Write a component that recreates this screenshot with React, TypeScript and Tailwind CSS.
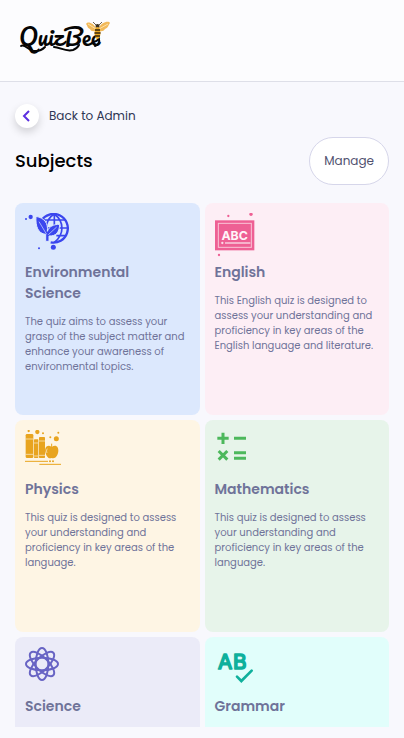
import type { ReactNode } from "react";

type Subject = {
  title: string;
  description?: string;
  background: string;
  icon: ReactNode;
};

function Logo() {
  return (
    <svg viewBox="0 0 94 36" className="h-9 w-[94px] overflow-visible" role="img" aria-label="QuizBee">
      <text
        x="0"
        y="26"
        className="font-['Pacifico','Kaushan_Script','Lato',cursive] text-[23px] font-normal"
        fill="#050505"
      >
        QuizBee
      </text>
      <path
        d="M2 26 C6 23 10 32 17 31 C21 31 24 29 26 27 M35 27 C41 27 46 32 54 30 C57 29 59 27 60 25 M76 26 C79 25 81 22 80 19"
        fill="none"
        stroke="#050505"
        strokeWidth="2"
        strokeLinecap="round"
      />
      <path d="M78 9 C74 2 68 1 67 4 C69 6 68 8 71 9 C72 12 76 12 78 9Z" fill="#f2b95a" />
      <path d="M79 9 C82 2 90 0 91 3 C89 6 89 8 86 9 C84 12 81 12 79 9Z" fill="#f2b95a" />
      <path d="M69 4 L77 9 M80 9 L89 4" stroke="#fbe2ac" strokeWidth="1" />
      <path d="M77 5 L74 2 M80 5 L83 2" stroke="#4a3820" strokeWidth="0.8" />
      <circle cx="78.5" cy="6" r="2" fill="#3c3120" />
      <ellipse cx="78.5" cy="13" rx="3" ry="6" fill="#e9a723" />
      <path d="M76 10h5M75.5 13h6M76 16h5" stroke="#33240d" strokeWidth="1.4" />
    </svg>
  );
}

function EnvironmentIcon() {
  return (
    <svg viewBox="45 39 132 132" className="size-11" aria-hidden="true">
      <g fill="none" stroke="#3b46ee" strokeWidth="5">
        <path d="M94 62 A43 43 0 1 1 122 127" strokeWidth="7" />
        <path d="M133 42 C114 53 109 67 109 84 M133 42 C164 66 163 103 133 127 M133 42 V90 M101 60 H165 M112 84 H175 M139 107 H165" />
      </g>
      <path
        d="M78 49 C104 54 115 70 112 94 C118 79 130 73 149 73 C148 96 139 109 117 108 V124 H107 V103 C84 101 76 79 78 49Z"
        fill="#3b46ee"
        stroke="#dce8fd"
        strokeWidth="3"
      />
      <path d="M87 65 L110 103 M140 81 L115 104" fill="none" stroke="#dce8fd" strokeWidth="2" />
      <g fill="#3b46ee">
        <circle cx="62" cy="51" r="6.5" />
        <circle cx="48" cy="57" r="3" />
        <circle cx="130" cy="142" r="7.5" />
        <circle cx="87" cy="145" r="3" />
      </g>
    </svg>
  );
}

function EnglishIcon() {
  return (
    <svg viewBox="43 39 132 132" className="size-11" aria-hidden="true">
      <rect x="43" y="61" width="118" height="90" fill="#ee6094" />
      <rect x="53" y="70" width="99" height="72" fill="none" stroke="#fbc4d7" strokeWidth="3" />
      <text
        x="102"
        y="120"
        textAnchor="middle"
        fill="#fff4f8"
        className="font-['Inter',sans-serif] text-[37px] font-bold"
      >
        ABC
      </text>
      <path d="M73 129 H149" stroke="#fbdce7" strokeWidth="4" />
      <g fill="#ee6094">
        <circle cx="83" cy="48" r="3.5" />
        <circle cx="151" cy="43" r="5" />
        <circle cx="55" cy="165" r="3.5" />
      </g>
      <circle cx="65" cy="129" r="3.5" fill="#fbdce7" />
    </svg>
  );
}

function PhysicsIcon() {
  return (
    <svg viewBox="45 45 132 132" className="size-11" aria-hidden="true">
      <g fill="#e8a41f">
        <rect x="47" y="57" width="23" height="72" rx="4" />
        <rect x="72" y="73" width="13" height="56" rx="2" />
        <rect x="87" y="66" width="18" height="63" rx="2" />
        <path d="M125 96 C113 86 103 97 106 111 C109 125 116 133 125 129 C136 133 144 121 145 108 C146 95 137 87 125 96Z" />
        <circle cx="56" cy="48" r="3.5" />
        <circle cx="82" cy="51" r="6.5" />
        <circle cx="99" cy="55" r="3" />
        <circle cx="121" cy="67" r="3" />
        <circle cx="139" cy="71" r="7.5" />
        <circle cx="145" cy="53" r="3" />
        <circle cx="120" cy="139" r="3" />
        <circle cx="129" cy="139" r="3" />
      </g>
      <path d="M125 97 V86 M45 139 H114 M88 148 H153" fill="none" stroke="#e8a41f" strokeWidth="3" />
      <path
        d="M47 72h23M47 118h23M72 84h13M72 123h13M87 78h18M87 121h18M112 101 C108 106 110 111 111 114"
        fill="none"
        stroke="#fef3dc"
        strokeWidth="2"
      />
    </svg>
  );
}

function MathematicsIcon() {
  return (
    <svg viewBox="45 45 132 132" className="size-11" aria-hidden="true">
      <path
        d="M52 70H86M69 53V87M102 70H138M56 108L82 134M82 108L56 134M102 113H138M102 130H138"
        fill="none"
        stroke="#4db85c"
        strokeWidth="9"
      />
    </svg>
  );
}

function ScienceIcon() {
  return (
    <svg viewBox="45 51 132 132" className="size-11" aria-hidden="true">
      <g fill="none" stroke="#6864c4" strokeWidth="6">
        <ellipse cx="96" cy="102" rx="48" ry="19" />
        <ellipse cx="96" cy="102" rx="48" ry="19" transform="rotate(45 96 102)" />
        <ellipse cx="96" cy="102" rx="48" ry="19" transform="rotate(90 96 102)" />
        <ellipse cx="96" cy="102" rx="48" ry="19" transform="rotate(135 96 102)" />
      </g>
    </svg>
  );
}

function GrammarIcon() {
  return (
    <svg viewBox="45 51 132 132" className="size-11" aria-hidden="true">
      <g
        fill="#0fb09c"
        stroke="#0fb09c"
        strokeWidth="5"
        strokeLinejoin="round"
        className="font-['Inter',sans-serif] text-[62px] font-normal"
      >
        <text x="54" y="118">
          A
        </text>
        <text x="99" y="118">
          B
        </text>
      </g>
      <path d="M111 139 L124 153 L155 122" fill="none" stroke="#e1fefb" strokeWidth="16" />
      <path
        d="M111 140 L124 153 L155 122"
        fill="none"
        stroke="#0fb09c"
        strokeWidth="8"
        strokeLinecap="round"
      />
    </svg>
  );
}

const subjects: Subject[] = [
  {
    title: "Environmental Science",
    description:
      "The quiz aims to assess your grasp of the subject matter and enhance your awareness of environmental topics.",
    background: "bg-[#dce8fd]",
    icon: <EnvironmentIcon />,
  },
  {
    title: "English",
    description:
      "This English quiz is designed to assess your understanding and proficiency in key areas of the English language and literature.",
    background: "bg-[#fdeef5]",
    icon: <EnglishIcon />,
  },
  {
    title: "Physics",
    description:
      "This quiz is designed to assess your understanding and proficiency in key areas of the language.",
    background: "bg-[#fef5e4]",
    icon: <PhysicsIcon />,
  },
  {
    title: "Mathematics",
    description:
      "This quiz is designed to assess your understanding and proficiency in key areas of the language.",
    background: "bg-[#e7f4ea]",
    icon: <MathematicsIcon />,
  },
  { title: "Science", background: "bg-[#ebebf8]", icon: <ScienceIcon /> },
  { title: "Grammar", background: "bg-[#e1fefb]", icon: <GrammarIcon /> },
];

function SubjectCard({ title, description, background, icon }: Subject) {
  return (
    <article className={`rounded-lg p-[10px] text-[#6f7399] ${background}`}>
      {icon}
      <h2 className="mt-[5px] pr-5 text-sm leading-[21px] font-semibold">{title}</h2>
      {description && <p className="mt-[10px] text-[10px] leading-[15px]">{description}</p>}
    </article>
  );
}

export default function App() {
  return (
    <div className="flex h-screen flex-col bg-[#f8f8fd] font-['Poppins','Inter',sans-serif]">
      <header className="shrink-0 border-b border-[#dedfe8] bg-[#fcfcfe] px-[19px] pt-5 pb-[25px]">
        <Logo />
      </header>
      <main className="flex min-h-0 grow flex-col px-[15px] pt-[22px] pb-[11px]">
        <div>
          <button type="button" className="flex items-center gap-[10px] text-xs leading-6 text-[#2f3654]">
            <span className="flex size-6 items-center justify-center rounded-full bg-white shadow-[0_4px_8px_rgba(0,0,0,0.16)]">
              <svg viewBox="0 0 12 12" className="size-3" aria-hidden="true">
                <path d="M8 1 L3 6 L8 11" fill="none" stroke="#5b2fe0" strokeWidth="2" />
              </svg>
            </span>
            Back to Admin
          </button>
        </div>
        <div className="mt-[9px] flex items-center justify-between">
          <h1 className="text-lg font-medium text-black">Subjects</h1>
          <button
            type="button"
            className="h-12 rounded-3xl border border-[#d6d6ea] bg-white px-[14px] text-xs text-[#51516f]"
          >
            Manage
          </button>
        </div>
        <section
          aria-label="Subjects"
          className="mt-[18px] grid min-h-0 grow auto-rows-[212px] grid-cols-2 gap-[5px] overflow-y-auto [scrollbar-width:none]"
        >
          {subjects.map((subject) => (
            <SubjectCard key={subject.title} {...subject} />
          ))}
        </section>
      </main>
    </div>
  );
}
